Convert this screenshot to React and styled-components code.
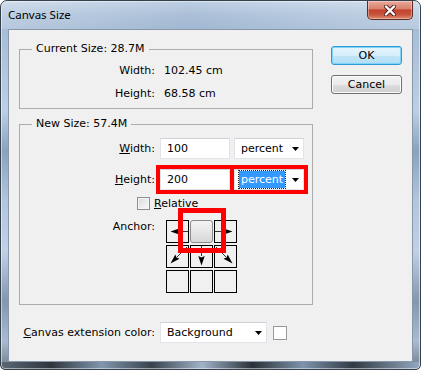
import React from "react";
import styled, { createGlobalStyle } from "styled-components";

const GlobalStyle = createGlobalStyle`
  html, body { margin: 0; padding: 0; background: #ffffff; }
  body { font-family: "DejaVu Sans", Verdana, sans-serif; }
  #root { width: 421px; height: 370px; }
`;

const Window = styled.div`
  box-sizing: border-box;
  width: 421px;
  height: 370px;
  border: 1px solid #34404c;
  border-radius: 7px 7px 5px 5px;
  padding: 0 7px 7px;
  display: flex;
  flex-direction: column;
  overflow: hidden;
  background:
    linear-gradient(90deg, #5b6875 0%, #2e353d 12%, #8196ad 24%, #39424c 36%, #a0b4c9 48%, #2a3037 60%, #7d93ab 72%, #323a43 84%, #93a8bf 100%) left bottom / 100% 7px no-repeat,
    linear-gradient(180deg, #c6d6e8 0px, #b0c5dc 14px, #a7bdd6 28px, #bccfe3 110px, #8aa2be 150px, #b2c6dc 200px, #c0d1e4 250px, #8397ad 300px, #a9bccf 340px, #6b7886 370px);
  box-shadow: inset 0 0 0 1px rgba(255, 255, 255, 0.5);
  font-family: "DejaVu Sans", Verdana, sans-serif;
  font-size: 11px;
  color: #000;
`;

const TitleBar = styled.div`
  height: 28px;
  margin: 0 -7px;
  padding: 0 7px;
  display: flex;
  justify-content: space-between;
  align-items: flex-start;
  background: linear-gradient(90deg, rgba(255,255,255,0.18) 0%, rgba(70,100,140,0.06) 45%, rgba(255,255,255,0.08) 75%, rgba(255,255,255,0.2) 100%);
`;

const Title = styled.div`
  font-family: "Noto Sans", "DejaVu Sans", sans-serif;
  font-size: 11.5px;
  line-height: 16px;
  padding-top: 6px;
  color: #000;
`;

const CloseButton = styled.div`
  box-sizing: border-box;
  width: 46px;
  height: 19px;
  border: 1px solid #5e2a26;
  border-top: none;
  border-radius: 0 0 5px 5px;
  display: flex;
  align-items: center;
  justify-content: center;
  background: linear-gradient(180deg, #e9aa9b 0%, #d9826f 42%, #c3432e 50%, #c8533b 75%, #e08a6e 100%);
  box-shadow: inset 0 0 0 1px rgba(255, 255, 255, 0.35);
`;

const Client = styled.div`
  flex: 1;
  display: flex;
  background: #f0f0f0;
  border: 1px solid #8796a8;
`;

const LeftColumn = styled.div`
  display: flex;
  flex-direction: column;
  padding: 12px 0 0 10px;
`;

const Group = styled.fieldset`
  box-sizing: border-box;
  width: 294px;
  min-width: 0;
  margin: ${(p) => p.$mt || 0}px 0 0;
  padding: ${(p) => p.$pad};
  border: 1px solid #acacac;
`;

const Legend = styled.legend`
  margin-left: 12px;
  padding: 0 4px;
  line-height: 14px;
  height: 14px;
`;

const InfoRow = styled.div`
  display: flex;
  align-items: center;
  height: 23px;
`;

const Label = styled.div`
  width: ${(p) => p.$w || 135}px;
  flex: none;
  text-align: right;
  margin-right: ${(p) => p.$gap ?? 5}px;
  line-height: 13px;
`;

const FieldRow = styled.div`
  display: flex;
  align-items: center;
  height: 21px;
  margin-top: ${(p) => p.$mt || 0}px;
`;

const TextBox = styled.div`
  box-sizing: border-box;
  width: 70px;
  height: 21px;
  background: #fff;
  border: 1px solid #e0e3e8;
  border-top-color: #cdd1d8;
  padding-left: 6px;
  line-height: 19px;
  outline: ${(p) => (p.$marked ? "4px solid #ff0000" : "none")};
`;

const Select = styled.div`
  box-sizing: border-box;
  width: ${(p) => p.$w || 70}px;
  height: 21px;
  margin-left: ${(p) => p.$ml ?? 4}px;
  background: #fff;
  border: 1px solid #e0e3e8;
  border-top-color: #cdd1d8;
  padding: 0 4px 0 6px;
  display: flex;
  align-items: center;
  justify-content: space-between;
  outline: ${(p) => (p.$marked ? "4px solid #ff0000" : "none")};
`;

const SelectValue = styled.span`
  margin-left: -2px;
  padding: 0 2px;
  height: 17px;
  line-height: 17px;
  background: ${(p) => (p.$selected ? "#3399ff" : "transparent")};
  color: ${(p) => (p.$selected ? "#fff" : "#000")};
  outline: ${(p) => (p.$selected ? "1px dotted #222" : "none")};
`;

const CheckRow = styled.div`
  display: flex;
  align-items: center;
  height: 15px;
  margin-top: 6px;
  padding-left: 117px;
  gap: 4px;
`;

const CheckBox = styled.div`
  box-sizing: border-box;
  width: 13px;
  height: 13px;
  border: 1px solid #8e8f8f;
  background: linear-gradient(135deg, #d6d8dc 0%, #eceef0 60%, #fafafa 100%);
  box-shadow: inset 0 0 0 1px #f4f4f4;
`;

const AnchorRow = styled.div`
  display: flex;
  align-items: flex-start;
  margin-top: 9px;
`;

const GridWrap = styled.div`
  position: relative;
  margin-left: 6px;
`;

const AnchorGrid = styled.div`
  display: grid;
  grid-template-columns: repeat(3, 23px);
  grid-auto-rows: 23px;
  column-gap: 1px;
  row-gap: 2px;
`;

const Cell = styled.div`
  box-sizing: border-box;
  border: 1px solid ${(p) => (p.$selected ? "#8a8a8a" : "#000")};
  border-radius: ${(p) => (p.$selected ? "3px" : "0")};
  background: ${(p) => (p.$selected ? "linear-gradient(180deg, #f4f4f4 0%, #e6e6e6 50%, #d8d8d8 100%)" : "transparent")};
  display: flex;
`;

const Annotation = styled.div`
  position: absolute;
  left: 12px;
  top: -12px;
  width: 48px;
  height: 45px;
  box-sizing: border-box;
  border: 5px solid #ff0000;
  pointer-events: none;
`;

const BottomRow = styled.div`
  display: flex;
  align-items: center;
  height: 21px;
  margin-top: 17px;
`;

const Swatch = styled.div`
  box-sizing: border-box;
  width: 14px;
  height: 14px;
  margin-left: 6px;
  background: #fff;
  border: 1px solid #9a9a9a;
`;

const ButtonColumn = styled.div`
  display: flex;
  flex-direction: column;
  gap: 10px;
  padding-top: 16px;
  margin-left: 18px;
`;

const Button = styled.div`
  box-sizing: border-box;
  width: 71px;
  height: 19px;
  border-radius: 3px;
  display: flex;
  align-items: center;
  justify-content: center;
  border: 1px solid ${(p) => (p.$default ? "#2f9ad8" : "#707070")};
  background: ${(p) =>
    p.$default
      ? "linear-gradient(180deg, #e6f5fd 0%, #d6eefb 50%, #c2e5f8 51%, #b2ddf5 100%)"
      : "linear-gradient(180deg, #f2f2f2 0%, #ebebeb 50%, #dddddd 51%, #cfcfcf 100%)"};
  box-shadow: ${(p) => (p.$default ? "inset 0 0 0 1px #7fd3f7" : "inset 0 0 0 1px #fcfcfc")};
`;

const Arrow = () => (
  <svg width="7" height="4" viewBox="0 0 7 4">
    <path d="M0 0H7L3.5 4Z" fill="#000" />
  </svg>
);

const CloseGlyph = () => (
  <svg width="12" height="11" viewBox="0 0 12 11">
    <path d="M2 1.5L10 9.5M10 1.5L2 9.5" stroke="#4a1f1c" strokeWidth="4" strokeLinecap="round" />
    <path d="M2 1.5L10 9.5M10 1.5L2 9.5" stroke="#fff" strokeWidth="2.4" strokeLinecap="round" />
  </svg>
);

const arrowDrawings = {
  left: (
    <>
      <line x1="12" y1="10.5" x2="21" y2="10.5" stroke="#333" strokeWidth="1" />
      <path d="M3.5 10.5L13 7.3L11.5 10.5L13 13.7Z" fill="#000" />
    </>
  ),
  right: (
    <>
      <line x1="0" y1="10.5" x2="9" y2="10.5" stroke="#333" strokeWidth="1" />
      <path d="M17.5 10.5L8 7.3L9.5 10.5L8 13.7Z" fill="#000" />
    </>
  ),
  down: (
    <>
      <line x1="10.5" y1="0" x2="10.5" y2="10" stroke="#333" strokeWidth="1" />
      <path d="M10.5 19.5L7.3 10L10.5 11.5L13.7 10Z" fill="#000" />
    </>
  ),
  downLeft: (
    <>
      <line x1="10" y1="11" x2="20" y2="1" stroke="#333" strokeWidth="1" />
      <path d="M3.5 17.5L8.3 8.5L9.5 11.5L12.5 12.7Z" fill="#000" />
    </>
  ),
  downRight: (
    <>
      <line x1="11" y1="11" x2="1" y2="1" stroke="#333" strokeWidth="1" />
      <path d="M17.5 17.5L12.7 8.5L11.5 11.5L8.5 12.7Z" fill="#000" />
    </>
  ),
};

const cells = ["left", "center", "right", "downLeft", "down", "downRight", null, null, null];

const AnchorCell = ({ kind }) => (
  <Cell $selected={kind === "center"}>
    {kind && kind !== "center" && (
      <svg width="21" height="21" viewBox="0 0 21 21">
        {arrowDrawings[kind]}
      </svg>
    )}
  </Cell>
);

export default function App() {
  return (
    <>
      <GlobalStyle />
      <Window>
        <TitleBar>
          <Title>Canvas Size</Title>
          <CloseButton>
            <CloseGlyph />
          </CloseButton>
        </TitleBar>
        <Client>
          <LeftColumn>
            <Group $pad="3px 0 3px">
              <Legend>Current Size: 28.7M</Legend>
              <InfoRow>
                <Label $gap={9}>Width:</Label>
                <span>102.45 cm</span>
              </InfoRow>
              <InfoRow>
                <Label $gap={9}>Height:</Label>
                <span>68.58 cm</span>
              </InfoRow>
            </Group>

            <Group $mt={8} $pad="7px 0 11px">
              <Legend>New Size: 57.4M</Legend>
              <FieldRow>
                <Label><u>W</u>idth:</Label>
                <TextBox>100</TextBox>
                <Select>
                  <SelectValue>percent</SelectValue>
                  <Arrow />
                </Select>
              </FieldRow>
              <FieldRow $mt={10}>
                <Label><u>H</u>eight:</Label>
                <TextBox $marked>200</TextBox>
                <Select $marked>
                  <SelectValue $selected>percent</SelectValue>
                  <Arrow />
                </Select>
              </FieldRow>
              <CheckRow>
                <CheckBox />
                <span><u>R</u>elative</span>
              </CheckRow>
              <AnchorRow>
                <Label>Anchor:</Label>
                <GridWrap>
                  <AnchorGrid>
                    {cells.map((k, i) => (
                      <AnchorCell key={i} kind={k} />
                    ))}
                  </AnchorGrid>
                  <Annotation />
                </GridWrap>
              </AnchorRow>
            </Group>

            <BottomRow>
              <Label $w={136}><u>C</u>anvas extension color:</Label>
              <Select $w={107} $ml={0}>
                <SelectValue>Background</SelectValue>
                <Arrow />
              </Select>
              <Swatch />
            </BottomRow>
          </LeftColumn>

          <ButtonColumn>
            <Button $default>OK</Button>
            <Button>Cancel</Button>
          </ButtonColumn>
        </Client>
      </Window>
    </>
  );
}
